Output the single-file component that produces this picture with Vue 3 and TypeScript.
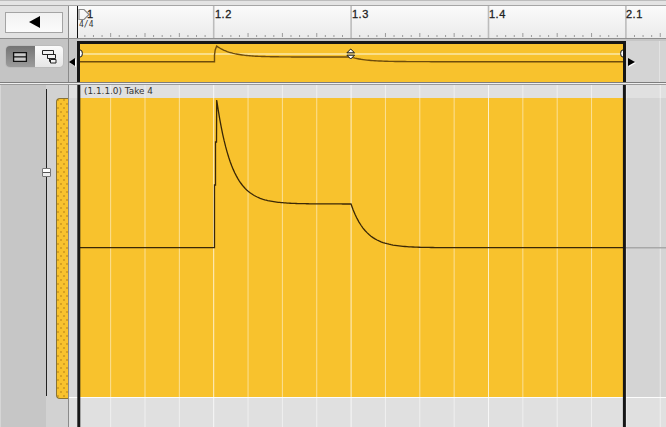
<script setup lang="ts">
// All curve and grid coordinates are page pixels; each svg's viewBox maps them into place.
const bar = 137.4
const x0 = 76.3
const sub = Array.from({ length: 18 }, (_, i) => x0 + (i * bar) / 4).filter((x) => x > 80)
const ticks = Array.from({ length: 72 }, (_, i) => ({ x: x0 + (i * bar) / 16, i })).filter((t) => t.x > 78)
const bars = [
  { label: '1', left: 18 },
  { label: '1.2', left: 146 },
  { label: '1.3', left: 283 },
  { label: '1.4', left: 420 },
  { label: '2.1', left: 557 }
]

function curve(base: number, mid: number, peak: number, steps: [number, number][]): string {
  const rise = 214.5
  const top = 216.7
  const fall = 351
  let d = `M80 ${base}L${rise} ${base}`
  for (const [x, y] of steps) d += `L${x} ${y}`
  d += `L${top} ${peak}`
  for (let x = top; x <= fall; x += 1.5) {
    d += `L${x.toFixed(1)} ${(mid + (peak - mid) * Math.exp(-(x - top) / 15)).toFixed(2)}`
  }
  for (let x = fall; x <= 623; x += 2) {
    d += `L${x} ${(base + (mid - base) * Math.exp(-(x - fall) / 15)).toFixed(2)}`
  }
  return d
}
const mainCurve = curve(247.7, 204, 100, [[214.5, 185], [215.5, 185], [215.5, 142], [216.5, 142]])
const miniCurve = curve(61.7, 57, 46, [[214.5, 55], [215.2, 50]])
</script>

<template>
  <div class="app">
    <div class="top-strip"></div>
    <div class="ruler-row">
      <div class="corner">
        <button class="back"><span class="tri"></span></button>
      </div>
      <div class="ruler">
        <svg class="fill-svg" width="597" height="32" viewBox="69 6 597 32">
          <g v-for="t in ticks" :key="t.i">
            <line v-if="t.i % 16 === 0" :x1="t.x" :x2="t.x" y1="6" y2="38" stroke="#bcbcbc" stroke-width="1.6" />
            <line v-else :x1="t.x" :x2="t.x" :y1="t.i % 4 === 0 ? 33 : 35" y2="37" stroke="#9c9c9c" />
          </g>
          <path d="M79 9.5h5l5 5-5 5h-5z" fill="none" stroke="#8a8a8a" stroke-width="1.2" />
          <line x1="77.5" x2="77.5" y1="6" y2="38" stroke="#111" />
        </svg>
        <span v-for="b in bars" :key="b.label" class="bar-label" :style="{ left: b.left + 'px' }">{{ b.label }}</span>
        <span class="sig">4/4</span>
      </div>
    </div>
    <div class="over-row">
      <div class="corner over-corner">
        <div class="toggle">
          <span class="seg on">
            <svg width="16" height="12" viewBox="0 0 16 12">
              <path d="M1.6 1.6h12.8v4.2H1.6zM1.6 5.8h12.8v4.6H1.6z" fill="#c9c9c9" stroke="#111" stroke-width="1.3" />
            </svg>
          </span>
          <span class="seg">
            <svg width="16" height="15" viewBox="0 0 16 15">
              <path d="M1.5 1.5h11v4h-11zM6.5 5.5h8v4h-8zM9.5 10.5h5.5v3.5H9.5zM8.5 9.5v3h1" fill="#f2f2f2" stroke="#222" />
            </svg>
          </span>
        </div>
      </div>
      <div class="over">
        <div class="pad"></div>
        <div class="over-clip">
          <svg width="543" height="38" viewBox="80 44 543 38">
            <line x1="80" x2="623" y1="54" y2="54" stroke="#fbe9a8" stroke-width="1.4" />
            <path :d="miniCurve" fill="none" stroke="#6e4c0c" stroke-width="1.4" />
            <ellipse cx="80" cy="53.5" rx="2.4" ry="3.6" fill="#fff" stroke="#111" />
            <ellipse cx="623" cy="53.5" rx="2.4" ry="3.6" fill="#fff" stroke="#111" />
            <path d="M350.7 49l3.8 3.8h-7.6zM350.7 59l3.8-3.8h-7.6z" fill="#fff" stroke="#111" />
          </svg>
        </div>
        <div class="over-rest"></div>
        <span class="mark left"></span>
        <span class="mark right"></span>
      </div>
    </div>
    <div class="sep"></div>
    <div class="lane-row">
      <div class="side">
        <div class="slider"><span class="thumb"></span></div>
        <div class="handle"></div>
      </div>
      <div class="lane">
        <div class="lane-title"><span class="take">(1.1.1.0) Take 4</span></div>
        <div class="lane-body"></div>
        <svg class="overlay" width="597" height="342" viewBox="69 85 597 342">
          <line v-for="(s, i) in sub" :key="i" :x1="s" :x2="s" y1="85" y2="427" stroke="#fff"
            :stroke-opacity="(i + 1) % 4 === 0 ? 0.75 : 0.5" />
          <line x1="626" x2="666" y1="247.7" y2="247.7" stroke="#a8a8a8" stroke-width="1.4" />
          <path :d="mainCurve" fill="none" stroke="#3a2706" stroke-width="1.3" />
          <line x1="78.8" x2="78.8" y1="85" y2="427" stroke="#161616" stroke-width="3" />
          <line x1="624.4" x2="624.4" y1="85" y2="427" stroke="#161616" stroke-width="3" />
        </svg>
      </div>
    </div>
  </div>
</template>

<style scoped>
.app {
  width: 666px;
  height: 427px;
  overflow: hidden;
  display: flex;
  flex-direction: column;
  background: #c8c8c8;
  font-family: "Liberation Sans", Arial, sans-serif;
}
.top-strip {
  height: 6px;
  flex: none;
  background: linear-gradient(#bdbdbd 0 1px, #e4e4e4 1px 5px, #a6a6a6 5px);
}
.ruler-row {
  height: 33px;
  flex: none;
  display: flex;
  background: #e2e2e2;
  border-bottom: 1px solid #8e8e8e;
  box-sizing: border-box;
}
.corner {
  width: 69px;
  flex: none;
  box-sizing: border-box;
  border-right: 1px solid #8a8a8a;
  padding-left: 5px;
  display: flex;
  align-items: center;
}
.back {
  width: 58px;
  height: 21px;
  padding: 0;
  background: linear-gradient(#f2f2f2, #fbfbfb);
  border: 1px solid #a4a4a4;
  display: flex;
  align-items: center;
  justify-content: center;
}
.tri {
  width: 0;
  height: 0;
  border-style: solid;
  border-width: 6px 11px 6px 0;
  border-color: transparent #000 transparent transparent;
}
.ruler {
  position: relative;
  flex: 1;
  background: linear-gradient(#fbfbfb, #ebebeb);
}
.fill-svg {
  position: absolute;
  left: 0;
  top: 0;
}
.bar-label {
  position: absolute;
  top: 1px;
  font-size: 11px;
  line-height: 14px;
  letter-spacing: 0.5px;
  color: #222;
  -webkit-text-stroke: 0.3px #222;
}
.sig {
  position: absolute;
  left: 10px;
  top: 14px;
  font-family: "DejaVu Sans Mono", monospace;
  font-size: 8px;
  line-height: 9px;
  color: #333;
}
.over-row {
  height: 44px;
  flex: none;
  display: flex;
  background: #c6c6c6;
  border-bottom: 1px solid #7d7d7d;
  box-sizing: border-box;
}
.over-corner {
  background: #c4c4c4;
}
.toggle {
  display: flex;
  width: 57px;
  height: 21px;
  margin: -8px 0 0 1px;
  border-radius: 4px;
  overflow: hidden;
  box-shadow: 0 0 0 1px #bcbcbc;
}
.seg {
  flex: 1;
  display: flex;
  align-items: center;
  justify-content: center;
  background: linear-gradient(#fbfbfb, #e6e6e6);
}
.seg.on {
  background: linear-gradient(#747474, #9c9c9c);
}
.over {
  position: relative;
  flex: 1;
  display: flex;
  background: #c6c6c6;
}
.pad {
  width: 8px;
  flex: none;
}
.over-clip {
  width: 549px;
  flex: none;
  margin-top: 2px;
  box-sizing: border-box;
  background: #f8c22d;
  border: 3px solid #161616;
  border-bottom: 0;
  overflow: hidden;
}
.over-clip svg {
  display: block;
}
.over-rest {
  flex: 1;
  margin-top: 2px;
  background: linear-gradient(to right, #d4d4d4 0 33px, #e2e2e2 33px 34px, #d4d4d4 34px);
}
.mark {
  position: absolute;
  top: 19px;
  width: 0;
  height: 0;
  border-style: solid;
  filter: drop-shadow(1px 1px 0 #fff);
}
.mark.left {
  left: 0;
  border-width: 4px 6px 4px 0;
  border-color: transparent #000 transparent transparent;
}
.mark.right {
  left: 559px;
  border-width: 4px 0 4px 7px;
  border-color: transparent transparent transparent #000;
}
.sep {
  height: 2px;
  flex: none;
  background: linear-gradient(#efefef 0 1px, #9a9a9a 1px);
}
.lane-row {
  flex: 1;
  min-height: 0;
  display: flex;
}
.side {
  width: 69px;
  flex: none;
  box-sizing: border-box;
  border-right: 1px solid #8a8a8a;
  display: flex;
  padding-left: 46px;
  background: linear-gradient(to right, #d6d6d6 0 1px, #c6c6c6 1px 46px, #d2d2d2 46px);
}
.slider {
  position: relative;
  width: 1px;
  height: 307px;
  margin-top: 4px;
  background: #222;
}
.thumb {
  position: absolute;
  left: -4px;
  top: 79px;
  width: 7px;
  height: 7px;
  background: linear-gradient(#fff 0 3px, #555 3px 4px, #eee 4px);
  border: 1px solid #777;
  border-radius: 1px;
}
.handle {
  width: 11px;
  height: 299px;
  margin: 13px 0 0 9px;
  border: 1px solid #8a7434;
  border-right: 0;
  border-radius: 4px 0 0 4px;
  background-color: #f8c22d;
  background-image:
    radial-gradient(#d39f22 0.6px, transparent 1px),
    radial-gradient(#d39f22 0.6px, transparent 1px);
  background-size: 6px 8px;
  background-position: 1px 1px, 4px 5px;
}
.lane {
  position: relative;
  flex: 1;
  display: flex;
  flex-direction: column;
  background: #e0e0e0;
}
.lane-title {
  height: 13px;
  flex: none;
  position: relative;
}
.take {
  position: absolute;
  left: 15px;
  top: 1px;
  font-family: "DejaVu Sans", sans-serif;
  font-size: 8.9px;
  line-height: 11px;
  color: #333;
}
.lane-body {
  height: 299px;
  flex: none;
  background: linear-gradient(to right, #d8d8d8 0 9px, #f8c22d 9px 555px, #d4d4d4 555px);
  border-bottom: 1px solid #fdfdfd;
}
.overlay {
  position: absolute;
  left: 0;
  top: 0;
}
</style>

<style>
html,
body {
  margin: 0;
  background: #c8c8c8;
}
</style>
